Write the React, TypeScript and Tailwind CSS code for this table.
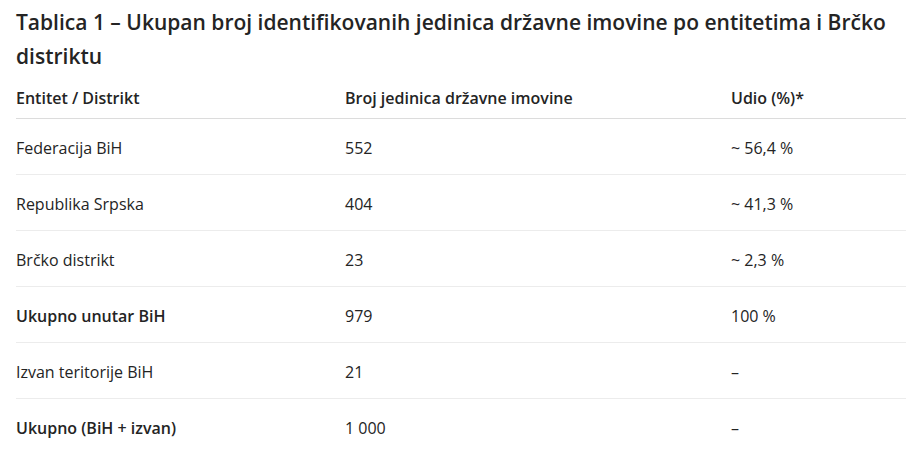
type Row = {
  name: string;
  count: string;
  share: string;
  bold?: boolean;
};

const rows: Row[] = [
  { name: "Federacija BiH", count: "552", share: "~ 56,4 %" },
  { name: "Republika Srpska", count: "404", share: "~ 41,3 %" },
  { name: "Brčko distrikt", count: "23", share: "~ 2,3 %" },
  { name: "Ukupno unutar BiH", count: "979", share: "100 %", bold: true },
  { name: "Izvan teritorije BiH", count: "21", share: "–" },
  { name: "Ukupno (BiH + izvan)", count: "1 000", share: "–", bold: true },
];

export default function App() {
  return (
    <div className="w-[906px] h-[452px] overflow-hidden bg-white pl-4 text-[#242424] font-['Open_Sans',sans-serif]">
      {/* TITLE */}
      <h2 className="pt-[5px] text-[21px] font-semibold leading-[34px]">
        Tablica 1 – Ukupan broj identifikovanih jedinica državne imovine po entitetima i Brčko distriktu
      </h2>

      {/* TABLE */}
      <table className="mt-[7px] w-[890px] table-fixed border-collapse text-[16px]">
        <colgroup>
          <col className="w-[329px]" />
          <col className="w-[386px]" />
          <col />
        </colgroup>
        <thead>
          <tr className="h-[38px] border-b border-[#dcdcdc] text-left">
            <th className="pb-[2px] font-semibold">Entitet / Distrikt</th>
            <th className="pb-[2px] font-semibold">Broj jedinica državne imovine</th>
            <th className="pb-[2px] font-semibold">Udio (%)*</th>
          </tr>
        </thead>
        <tbody>
          {rows.map((row) => (
            <tr key={row.name} className="h-[56px] border-b border-[#ececec] last:border-b-0">
              <td className={row.bold ? "pt-[3px] font-semibold" : "pt-[3px]"}>{row.name}</td>
              <td className="pt-[3px]">{row.count}</td>
              <td className="pt-[3px]">{row.share}</td>
            </tr>
          ))}
        </tbody>
      </table>
    </div>
  );
}
